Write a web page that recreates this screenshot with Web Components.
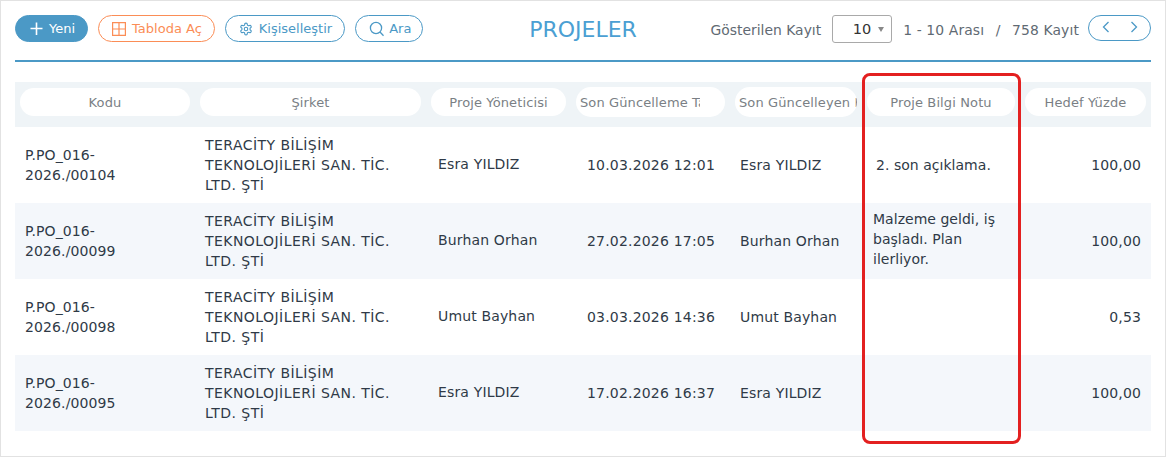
<!DOCTYPE html>
<html lang="tr">
<head>
<meta charset="utf-8">
<title>Projeler</title>
<style>
  html, body { margin: 0; padding: 0; background: #fff; }
  body { font-family: "DejaVu Sans", Verdana, sans-serif; }
</style>
</head>
<body>
<project-page>
  <tool-button slot="tools" kind="solid" icon="plus">Yeni</tool-button>
  <tool-button slot="tools" kind="orange" icon="table">Tabloda Aç</tool-button>
  <tool-button slot="tools" icon="gear">Kişiselleştir</tool-button>
  <tool-button slot="tools" kind="tight" icon="search">Ara</tool-button>
  <span slot="title">PROJELER</span>
  <page-info slot="paging" size="10" range="1 - 10 Arası" total="758 Kayıt"></page-info>

  <grid-head>
    <head-pill>Kodu</head-pill>
    <head-pill>Şirket</head-pill>
    <head-pill>Proje Yöneticisi</head-pill>
    <head-pill clip="short">Son Güncelleme Tarihi</head-pill>
    <head-pill clip="full">Son Güncelleyen Kişi</head-pill>
    <head-pill>Proje Bilgi Notu</head-pill>
    <head-pill>Hedef Yüzde</head-pill>
  </grid-head>

  <grid-row code="P.PO_016- 2026./00104" manager="Esra YILDIZ" date="10.03.2026 12:01" note="2. son açıklama." note-inset goal="100,00"></grid-row>
  <grid-row shaded code="P.PO_016- 2026./00099" manager="Burhan Orhan" date="27.02.2026 17:05" note="Malzeme geldi, iş başladı. Plan ilerliyor." goal="100,00"></grid-row>
  <grid-row code="P.PO_016- 2026./00098" manager="Umut Bayhan" date="03.03.2026 14:36" goal="0,53"></grid-row>
  <grid-row shaded code="P.PO_016- 2026./00095" manager="Esra YILDIZ" date="17.02.2026 16:37" goal="100,00"></grid-row>
</project-page>

<script>
const ICONS = {
  plus: `<svg width="14" height="14" viewBox="0 0 14 14" fill="none" stroke="currentColor" stroke-width="1.6"><path d="M6.500 .5v12.500M.5 6.500h12"/></svg>`,
  table: `<svg width="14" height="14" viewBox="0 0 14 14" fill="none" stroke="currentColor" stroke-width="1.2"><path d="M.6.6h12.800v12.800H.6zM7 .6v12.800M.6 7h12.800"/></svg>`,
  gear: `<svg width="14" height="14" viewBox="0 0 24 24" fill="none" stroke="currentColor" stroke-width="1.900" stroke-linejoin="round"><circle cx="12" cy="12" r="3"/><path d="M12.220 2h-.44a2 2 0 0 0-2 2v.18a2 2 0 0 1-1 1.730l-.43.25a2 2 0 0 1-2 0l-.15-.08a2 2 0 0 0-2.730.73l-.22.38a2 2 0 0 0 .73 2.730l.15.1a2 2 0 0 1 1 1.720v.51a2 2 0 0 1-1 1.740l-.15.09a2 2 0 0 0-.73 2.730l.22.38a2 2 0 0 0 2.730.73l.15-.08a2 2 0 0 1 2 0l.43.25a2 2 0 0 1 1 1.730V20a2 2 0 0 0 2 2h.44a2 2 0 0 0 2-2v-.18a2 2 0 0 1 1-1.730l.43-.25a2 2 0 0 1 2 0l.15.08a2 2 0 0 0 2.730-.73l.22-.39a2 2 0 0 0-.73-2.730l-.15-.08a2 2 0 0 1-1-1.740v-.5a2 2 0 0 1 1-1.740l.15-.09a2 2 0 0 0 .73-2.730l-.22-.38a2 2 0 0 0-2.730-.73l-.15.08a2 2 0 0 1-2 0l-.43-.25a2 2 0 0 1-1-1.730V4a2 2 0 0 0-2-2z"/></svg>`,
  search: `<svg width="15" height="16" viewBox="0 0 15 16" fill="none" stroke="currentColor" stroke-width="1.300"><circle cx="7" cy="7" r="5.600"/><path d="M11 11l3.500 3.700"/></svg>`,
  left: `<svg width="8" height="12" viewBox="0 0 8 12" fill="none" stroke="currentColor" stroke-width="1.300"><path d="M6.500 1L1.500 6l5 5"/></svg>`,
  right: `<svg width="8" height="12" viewBox="0 0 8 12" fill="none" stroke="currentColor" stroke-width="1.300"><path d="M1.500 1l5 5-5 5"/></svg>`
};

class ProjectPage extends HTMLElement {
  connectedCallback() {
    this.attachShadow({ mode: "open" }).innerHTML = `
      <style>
        :host {
          display: block;
          position: relative;
          box-sizing: border-box;
          width: 1166px;
          height: 457px;
          border: 1px solid #e2e2e2;
          padding: 14px 14px 0;
          background: #fff;
          font: 14px "DejaVu Sans", Verdana, sans-serif;
          color: #2f3a47;
          --cols: 180px 231px 145px 159px 132px 158px 131px;
        }
        .top {
          display: grid;
          grid-template-columns: 1fr auto 1fr;
          align-items: flex-start;
          height: 45px;
          border-bottom: 2px solid #4b99c6;
        }
        .tools { display: flex; gap: 10px; }
        .title {
          font-size: 22px;
          line-height: 30px;
          color: #4b9fd3;
        }
        .paging { display: flex; justify-content: flex-end; }
        .marker {
          position: absolute;
          left: 861px;
          top: 72px;
          width: 153px;
          height: 365px;
          border: 3px solid #e32020;
          border-radius: 8px;
        }
        main { padding-top: 20px; }
      </style>
      <div class="top">
        <div class="tools"><slot name="tools"></slot></div>
        <div class="title"><slot name="title"></slot></div>
        <div class="paging"><slot name="paging"></slot></div>
      </div>
      <main><slot></slot></main>
      <div class="marker"></div>`;
  }
}

class ToolButton extends HTMLElement {
  connectedCallback() {
    this.attachShadow({ mode: "open" }).innerHTML = `
      <style>
        :host {
          display: inline-flex;
          align-items: center;
          gap: 6px;
          box-sizing: border-box;
          height: 27px;
          padding: 0 12px 0 13px;
          border: 1px solid #4b99c6;
          border-radius: 14px;
          font-size: 13px;
          color: #4b99c6;
          white-space: nowrap;
        }
        :host([kind="solid"]) { background: #4b99c6; color: #fff; padding: 0 12px 0 14px; gap: 5px; }
        :host([kind="orange"]) { border-color: #fb8d56; color: #fb8d56; }
        :host([kind="tight"]) { gap: 5px; padding-right: 11px; }
        svg { display: block; flex: none; }
      </style>
      ${ICONS[this.getAttribute("icon")]}<slot></slot>`;
  }
}

class PageInfo extends HTMLElement {
  connectedCallback() {
    this.attachShadow({ mode: "open" }).innerHTML = `
      <style>
        :host { display: flex; align-items: flex-start; font-size: 13.900px; color: #5f6a73; white-space: nowrap; }
        .label { line-height: 30px; margin-right: 11px; }
        .select {
          box-sizing: border-box;
          display: flex;
          align-items: center;
          justify-content: flex-end;
          gap: 7px;
          width: 60px;
          height: 28px;
          padding-right: 7px;
          border: 1px solid #a9a9a9;
          border-radius: 3px;
          font-size: 14.500px;
          color: #333;
        }
        .caret { width: 0; height: 0; border: 3.500px solid transparent; border-top: 5px solid #888; border-bottom: 0; }
        .range { line-height: 30px; margin: 0 9px 0 11px; letter-spacing: .12px; }
        .pager {
          box-sizing: border-box;
          display: flex;
          align-items: center;
          justify-content: space-between;
          width: 63px;
          height: 26px;
          padding: 0 12px 2px 13px;
          border: 1px solid #4b99c6;
          border-radius: 13px;
          color: #4b99c6;
        }
        .sep { margin: 0 7px; }
      </style>
      <span class="label">Gösterilen Kayıt</span>
      <div class="select"><span>${this.getAttribute("size")}</span><span class="caret"></span></div>
      <span class="range">${this.getAttribute("range")} <span class="sep">/</span> ${this.getAttribute("total")}</span>
      <div class="pager">${ICONS.left}${ICONS.right}</div>`;
  }
}

class GridHead extends HTMLElement {
  connectedCallback() {
    this.attachShadow({ mode: "open" }).innerHTML = `
      <style>
        :host {
          display: grid;
          grid-template-columns: var(--cols);
          align-items: start;
          height: 45px;
          background: #eff4f7;
        }
      </style>
      <slot></slot>`;
  }
}

class HeadPill extends HTMLElement {
  connectedCallback() {
    this.attachShadow({ mode: "open" }).innerHTML = `
      <style>
        :host {
          display: block;
          box-sizing: border-box;
          height: 28px;
          margin: 6px 5px 0;
          padding: 0 4px;
          border-radius: 14px;
          background: #fff;
          font-size: 13px;
          line-height: 29px;
          letter-spacing: .12px;
          text-align: center;
          color: #7a7f85;
          white-space: nowrap;
          overflow: hidden;
        }
        :host([clip]) { text-align: left; margin-top: 5px; height: 30px; line-height: 31px; border-radius: 15px; padding: 0; }
        :host([clip]) span { display: block; overflow: hidden; margin: 0 0 0 4px; }
        :host([clip="short"]) span { margin-right: 25px; }
      </style>
      <span><slot></slot></span>`;
  }
}

class GridRow extends HTMLElement {
  connectedCallback() {
    const a = n => this.getAttribute(n) || "";
    this.attachShadow({ mode: "open" }).innerHTML = `
      <style>
        :host {
          display: grid;
          grid-template-columns: var(--cols);
          align-items: center;
          height: 76px;
          line-height: 20px;
        }
        :host([shaded]) { background: #f4f7fb; }
        div { box-sizing: border-box; padding: 0 10px; }
        .code { letter-spacing: .12px; }
        .firm { letter-spacing: .45px; }
        .person { letter-spacing: .15px; }
        .mgr { padding: 0 0 3px 12px; }
        .date { padding-left: 16px; white-space: nowrap; letter-spacing: .19px; }
        .note { padding: 0 16px 4px 11px; letter-spacing: .03px; }
        :host([note-inset]) .note { padding: 0 16px 0 14px; }
        .goal { text-align: right; padding-right: 10px; letter-spacing: .12px; }
      </style>
      <div class="code">${a("code")}</div>
      <div class="firm">TERACİTY BİLİŞİM TEKNOLOJİLERİ SAN. TİC. LTD. ŞTİ</div>
      <div class="person mgr">${a("manager")}</div>
      <div class="date">${a("date")}</div>
      <div class="person">${a("manager")}</div>
      <div class="note">${a("note")}</div>
      <div class="goal">${a("goal")}</div>`;
  }
}

customElements.define("project-page", ProjectPage);
customElements.define("tool-button", ToolButton);
customElements.define("page-info", PageInfo);
customElements.define("grid-head", GridHead);
customElements.define("head-pill", HeadPill);
customElements.define("grid-row", GridRow);
</script>
</body>
</html>
